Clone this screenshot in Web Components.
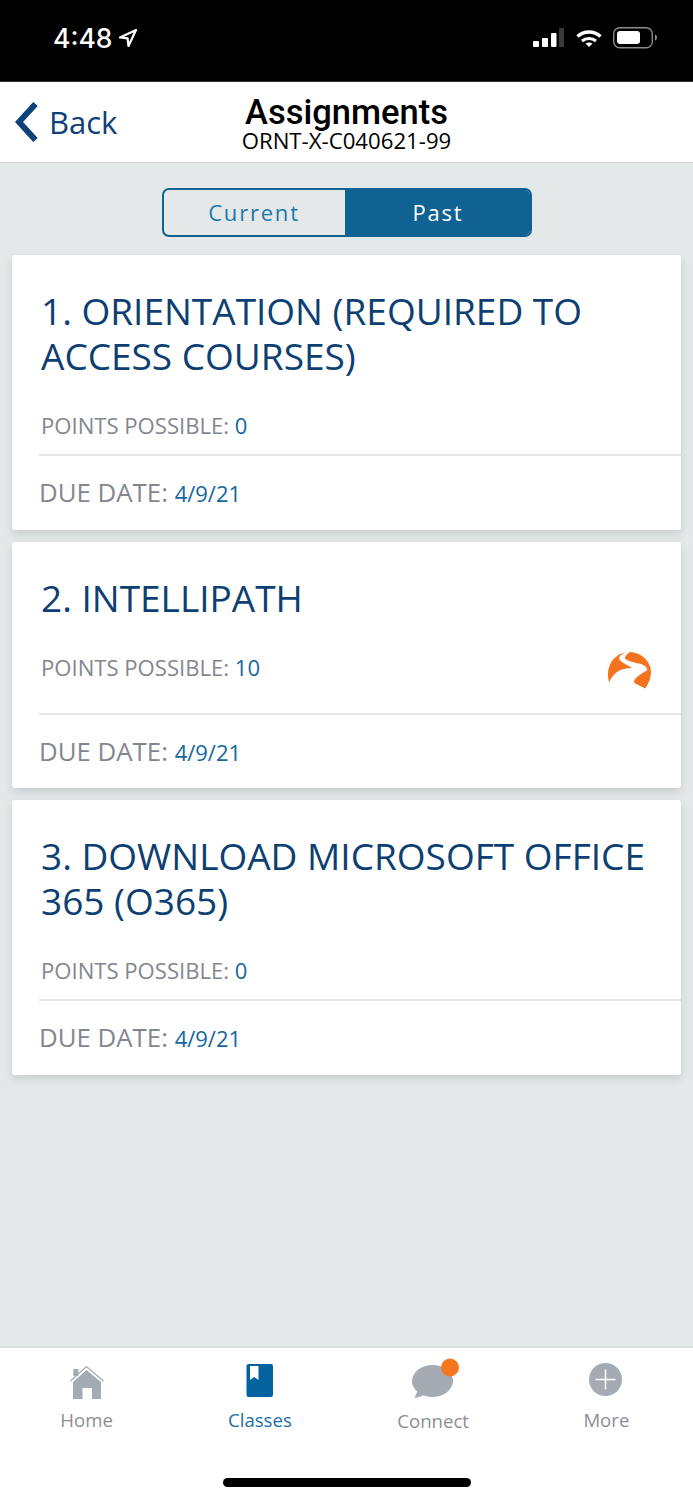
<!DOCTYPE html>
<html>
<head>
<meta charset="utf-8">
<title>Assignments</title>
<style>
  html, body { margin: 0; height: 100%; }
  body { font-family: "Open Sans", sans-serif; }
  app-screen { height: 1500px; }
</style>
</head>
<body>
<app-screen>
  <status-bar></status-bar>
  <nav-header title="Assignments" subtitle="ORNT-X-C040621-99"></nav-header>
  <seg-toggle></seg-toggle>
  <assignment-list>
    <assignment-card title="1. ORIENTATION (REQUIRED TO ACCESS COURSES)" points="0" due="4/9/21"></assignment-card>
    <assignment-card class="short" title="2. INTELLIPATH" points="10" due="4/9/21" logo></assignment-card>
    <assignment-card title="3. DOWNLOAD MICROSOFT OFFICE 365 (O365)" points="0" due="4/9/21"></assignment-card>
  </assignment-list>
  <tab-bar></tab-bar>
</app-screen>

<script>
class AppScreen extends HTMLElement {
    constructor() {
        super();
        this.attachShadow({ mode: 'open' });
        this.shadowRoot.innerHTML = `
            <style>
                :host {
                    display: flex;
                    flex-direction: column;
                    width: 693px;
                    background: #e4e8e9;
                    overflow: hidden;
                }
            </style>
            <slot></slot>
        `;
    }
}

class StatusBar extends HTMLElement {
    constructor() {
        super();
        this.attachShadow({ mode: 'open' });
        this.shadowRoot.innerHTML = `
            <style>
                :host {
                    display: flex;
                    align-items: flex-start;
                    justify-content: space-between;
                    box-sizing: border-box;
                    height: 82px;
                    padding: 22px 36px 0 53px;
                    background: #000;
                    border-bottom: 1px solid #333;
                    color: #fff;
                }
                .time {
                    display: flex;
                    align-items: center;
                    gap: 6px;
                    height: 32px;
                    font: 500 26.5px/32px "Inter", sans-serif;
                }
                .time svg { margin-left: -1px; }
                .icons { margin-top: 3px; }
                svg { display: block; }
            </style>
            <div class="time">
                <span>4:48</span>
                <svg width="20" height="20" viewBox="0 0 20 20"><path d="M18 2 2 9.500l7.600.9.9 7.600z" fill="none" stroke="#fff" stroke-width="2.200" stroke-linejoin="round"/></svg>
            </div>
            <div class="icons">
                <svg width="125" height="26" viewBox="0 0 125 26">
                    <rect x="1" y="16" width="6" height="6" rx="1" fill="#fff"/>
                    <rect x="10" y="13" width="6" height="9" rx="1" fill="#fff"/>
                    <rect x="19" y="8" width="5.500" height="14" rx="1" fill="#fff"/>
                    <rect x="27" y="3" width="5" height="19" rx="1" fill="#3a3a3a"/>
                    <path d="M45.500 11.500C52 5.500 62 5.500 68.500 11.500" fill="none" stroke="#fff" stroke-width="3.500"/>
                    <path d="M50 16C54 12.500 60 12.500 64 16" fill="none" stroke="#fff" stroke-width="3"/>
                    <path d="M57 22 53.500 18.500C55.500 17 58.500 17 60.500 18.500z" fill="#fff"/>
                    <rect x="81.700" y="2.700" width="38.600" height="20" rx="6" fill="none" stroke="#8c8c8c" stroke-width="1.400"/>
                    <rect x="85" y="6" width="23" height="13" rx="3" fill="#fff"/>
                    <path d="M123 9.500c1.500.5 2 2 2 3s-.5 2.500-2 3z" fill="#8c8c8c"/>
                </svg>
            </div>
        `;
    }
}

class NavHeader extends HTMLElement {
    constructor() {
        super();
        this.attachShadow({ mode: 'open' });
    }

    connectedCallback() {
        this.shadowRoot.innerHTML = `
            <style>
                :host {
                    display: grid;
                    grid-template-columns: 1fr auto 1fr;
                    align-items: center;
                    box-sizing: border-box;
                    height: 81px;
                    background: #fff;
                    border-bottom: 1px solid #cfd3d6;
                }
                .back {
                    display: flex;
                    align-items: center;
                    gap: 10px;
                    padding-left: 15px;
                    color: #0d4178;
                    font-size: 31px;
                    line-height: 40px;
                }
                .center { text-align: center; color: #000; padding-top: 2px; }
                .title { font: 500 34.5px/34px "Roboto", sans-serif; }
                .sub { font-size: 22.2px; line-height: 20px; margin-top: 2px; }
                svg { display: block; }
            </style>
            <div class="back">
                <svg width="24" height="40" viewBox="0 0 24 40"><path d="M20.500 2 4 20l16.500 18" fill="none" stroke="#0d4178" stroke-width="6"/></svg>
                <span>Back</span>
            </div>
            <div class="center">
                <div class="title">${this.getAttribute('title')}</div>
                <div class="sub">${this.getAttribute('subtitle')}</div>
            </div>
            <div></div>
        `;
    }
}

class SegToggle extends HTMLElement {
    constructor() {
        super();
        this.attachShadow({ mode: 'open' });
        this.shadowRoot.innerHTML = `
            <style>
                :host {
                    display: flex;
                    justify-content: center;
                    padding: 25px 0 18px;
                }
                .wrap {
                    display: grid;
                    grid-template-columns: 181px 1fr;
                    box-sizing: border-box;
                    width: 370px;
                    height: 49px;
                    border: 2px solid #106293;
                    border-radius: 7px;
                    overflow: hidden;
                    font-size: 22px;
                    font-weight: 500;
                    letter-spacing: 1.8px;
                    line-height: 45px;
                    text-align: center;
                }
                .cur { color: #1a78ae; }
                .past { color: #fff; background: #106293; padding-left: 2px; }
            </style>
            <div class="wrap">
                <div class="cur">Current</div>
                <div class="past">Past</div>
            </div>
        `;
    }
}

class AssignmentList extends HTMLElement {
    constructor() {
        super();
        this.attachShadow({ mode: 'open' });
        this.shadowRoot.innerHTML = `
            <style>
                :host {
                    display: flex;
                    flex-direction: column;
                    flex: 1;
                    gap: 12px;
                    padding: 0 12px;
                }
            </style>
            <slot></slot>
        `;
    }
}

class AssignmentCard extends HTMLElement {
    constructor() {
        super();
        this.attachShadow({ mode: 'open' });
    }

    connectedCallback() {
        const logo = this.hasAttribute('logo') ? `
            <svg class="logo" width="44" height="36.500" viewBox="0 0 130 108">
                <path d="M6 90C-6 50 15 5 60 0 48 3 36 10 36 18 36 30 60 38 74 47 55 47 38 52 28 60 18 68 12 78 6 90z" fill="#f5731f"/>
                <path d="M68 0C105 2 130 30 130 58c0 20-8 38-17 50-13-8-28-13-33-18-2-12 20-25 38-35 4-7-8-17-20-20-20-5-40-9-45-16 0-8 8-14 15-19z" fill="#f5731f"/>
            </svg>` : '';
        this.shadowRoot.innerHTML = `
            <style>
                :host {
                    display: block;
                    background: #fff;
                    border-radius: 3px;
                    box-shadow: 0 4px 9px rgba(60, 70, 75, 0.16);
                }
                .title {
                    padding: 33px 20px 0 29px;
                    color: #0d3f73;
                    font-size: 37px;
                    line-height: 45px;
                    min-height: 90px;
                }
                :host(.short) .title { min-height: 45px; }
                .points {
                    position: relative;
                    display: flex;
                    justify-content: space-between;
                    margin-left: 27px;
                    padding: 32px 0 14px 2px;
                    height: 30px;
                    line-height: 30px;
                    border-bottom: 2px solid #e4e6e8;
                    color: #84868f;
                    font-size: 22.1px;
                }
                :host(.short) .points { height: 47px; }
                .due {
                    margin-left: 27px;
                    padding: 18px 0 20px;
                    height: 36px;
                    line-height: 36px;
                    color: #84868f;
                    font-size: 25.8px;
                }
                :host(.short) .due { padding-bottom: 19px; }
                b { font-weight: 400; color: #15679d; font-size: 22px; }
                .logo { position: absolute; right: 30px; top: 32px; }
            </style>
            <div class="title">${this.getAttribute('title')}</div>
            <div class="points"><span>POINTS POSSIBLE: <b>${this.getAttribute('points')}</b></span>${logo}</div>
            <div class="due">DUE DATE: <b>${this.getAttribute('due')}</b></div>
        `;
    }
}

class TabBar extends HTMLElement {
    constructor() {
        super();
        this.attachShadow({ mode: 'open' });
        this.shadowRoot.innerHTML = `
            <style>
                :host {
                    display: block;
                    position: relative;
                    box-sizing: border-box;
                    height: 154px;
                    background: #fff;
                    border-top: 2px solid #dcdee0;
                }
                .tabs { display: grid; grid-template-columns: repeat(4, 1fr); }
                .tab {
                    display: flex;
                    flex-direction: column;
                    align-items: center;
                    height: 92px;
                    color: #8d8f93;
                    font-size: 18.6px;
                    line-height: 24px;
                }
                .tab.on { color: #1a6ea3; }
                .tab svg { display: block; height: 60px; width: 60px; }
                .connect span { margin-top: 1px; }
                .home {
                    position: absolute;
                    left: 223px;
                    bottom: 13px;
                    width: 248px;
                    height: 9px;
                    border-radius: 5px;
                    background: #000;
                }
            </style>
            <div class="tabs">
                <div class="tab">
                    <svg viewBox="0 0 60 60">
                        <path d="M13.500 33 29.500 18.500 46.500 33" fill="none" stroke="#a5abb3" stroke-width="1.300"/>
                        <rect x="16.400" y="21" width="5" height="7" fill="#a5abb3"/>
                        <path d="M29.500 22 16 34v17h9.500V40H35v11h9V34z" fill="#a5abb3"/>
                    </svg>
                    <span>Home</span>
                </div>
                <div class="tab on">
                    <svg viewBox="0 0 60 60">
                        <rect x="16.500" y="16" width="26.500" height="33" rx="2" fill="#04639f"/>
                        <path d="M20 18h8.500v14l-4.250-3L20 32z" fill="#fff"/>
                    </svg>
                    <span>Classes</span>
                </div>
                <div class="tab connect">
                    <svg viewBox="0 0 60 60" style="overflow:visible">
                        <ellipse cx="29.500" cy="33" rx="20.500" ry="16" fill="#a5abb3"/>
                        <path d="M15 42 11.500 50c4-.5 8-2 11-4z" fill="#a5abb3"/>
                        <circle cx="47" cy="19.500" r="9" fill="#f57520"/>
                    </svg>
                    <span>Connect</span>
                </div>
                <div class="tab">
                    <svg viewBox="0 0 60 60">
                        <circle cx="29.500" cy="31.500" r="16.500" fill="#a5abb3"/>
                        <path d="M29.500 21.500v20M19.500 31.500h20" stroke="#fff" stroke-width="1.500"/>
                    </svg>
                    <span>More</span>
                </div>
            </div>
            <div class="home"></div>
        `;
    }
}

customElements.define('app-screen', AppScreen);
customElements.define('status-bar', StatusBar);
customElements.define('nav-header', NavHeader);
customElements.define('seg-toggle', SegToggle);
customElements.define('assignment-list', AssignmentList);
customElements.define('assignment-card', AssignmentCard);
customElements.define('tab-bar', TabBar);
</script>
</body>
</html>
